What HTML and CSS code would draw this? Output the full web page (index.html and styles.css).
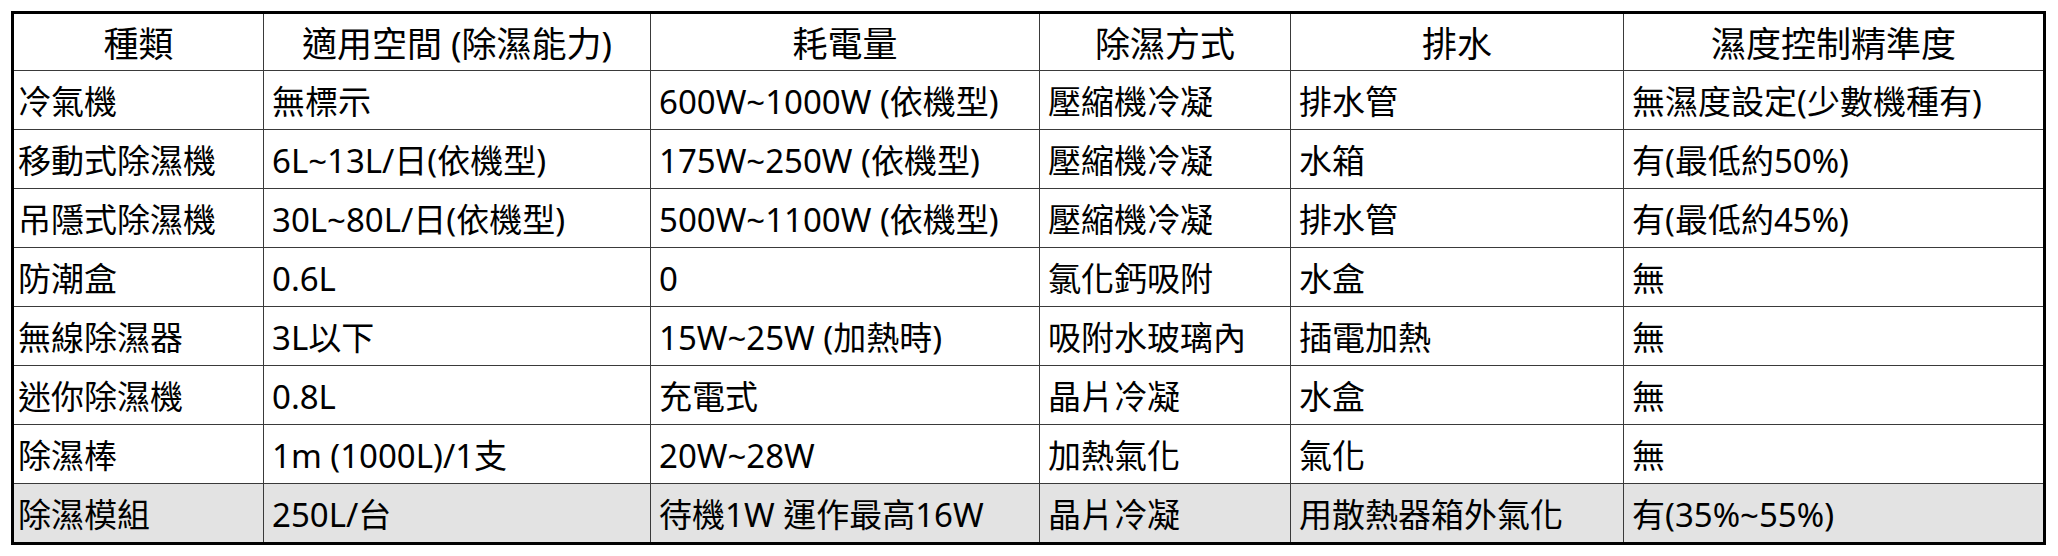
FILE: index.html
```html
<!DOCTYPE html>
<html lang="zh-Hant">
<head>
<meta charset="utf-8">
<title>除濕方式比較</title>
<link rel="stylesheet" href="styles.css">
</head>
<body>
<div class="frame">
<table class="compare">
  <thead>
    <tr>
      <th class="c1">種類</th>
      <th class="c2">適用空間 (除濕能力)</th>
      <th class="c3">耗電量</th>
      <th class="c4">除濕方式</th>
      <th class="c5">排水</th>
      <th class="c6">濕度控制精準度</th>
    </tr>
  </thead>
  <tbody>
    <tr><td>冷氣機</td><td>無標示</td><td>600W~1000W (依機型)</td><td>壓縮機冷凝</td><td>排水管</td><td>無濕度設定(少數機種有)</td></tr>
    <tr><td>移動式除濕機</td><td>6L~13L/日(依機型)</td><td>175W~250W (依機型)</td><td>壓縮機冷凝</td><td>水箱</td><td>有(最低約50%)</td></tr>
    <tr><td>吊隱式除濕機</td><td>30L~80L/日(依機型)</td><td>500W~1100W (依機型)</td><td>壓縮機冷凝</td><td>排水管</td><td>有(最低約45%)</td></tr>
    <tr><td>防潮盒</td><td>0.6L</td><td>0</td><td>氯化鈣吸附</td><td>水盒</td><td>無</td></tr>
    <tr><td>無線除濕器</td><td>3L以下</td><td>15W~25W (加熱時)</td><td>吸附水玻璃內</td><td>插電加熱</td><td>無</td></tr>
    <tr><td>迷你除濕機</td><td>0.8L</td><td>充電式</td><td>晶片冷凝</td><td>水盒</td><td>無</td></tr>
    <tr><td>除濕棒</td><td>1m (1000L)/1支</td><td>20W~28W</td><td>加熱氣化</td><td>氣化</td><td>無</td></tr>
    <tr class="highlight"><td>除濕模組</td><td>250L/台</td><td>待機1W 運作最高16W</td><td>晶片冷凝</td><td>用散熱器箱外氣化</td><td>有(35%~55%)</td></tr>
  </tbody>
</table>
</div>
</body>
</html>
```

FILE: styles.css
```css
html, body {
  margin: 0;
  padding: 0;
  background: #ffffff;
}

body {
  padding: 11px;
  font-family: "Noto Sans", "Noto Sans CJK TC", sans-serif;
  color: #000;
}

.frame {
  width: 2035px;
  box-sizing: border-box;
  border: 3px solid #000;
}

.compare {
  width: 100%;
  table-layout: fixed;
  border-collapse: separate;
  border-spacing: 0;
  font-size: 33px;
}

.compare th,
.compare td {
  box-sizing: border-box;
  border-right: 1px solid #3a3a3a;
  border-bottom: 1px solid #3a3a3a;
  padding: 3px 0 0 8px;
  text-align: left;
  white-space: nowrap;
  overflow: hidden;
  font-weight: 400;
  line-height: 1;
}

.compare th {
  height: 57px;
  text-align: center;
  padding-left: 0;
  font-size: 35px;
}

.compare td {
  height: 59px;
}

.compare th:last-child,
.compare td:last-child {
  border-right: none;
}

.compare tbody tr:last-child td {
  border-bottom: none;
  height: 58px;
}

.compare td:first-child {
  padding-left: 4px;
}

.c1 { width: 250px; }
.c2 { width: 387px; }
.c3 { width: 389px; }
.c4 { width: 251px; }
.c5 { width: 333px; }
.c6 { width: 419px; }

.highlight td {
  background: #e3e3e3;
}
```
